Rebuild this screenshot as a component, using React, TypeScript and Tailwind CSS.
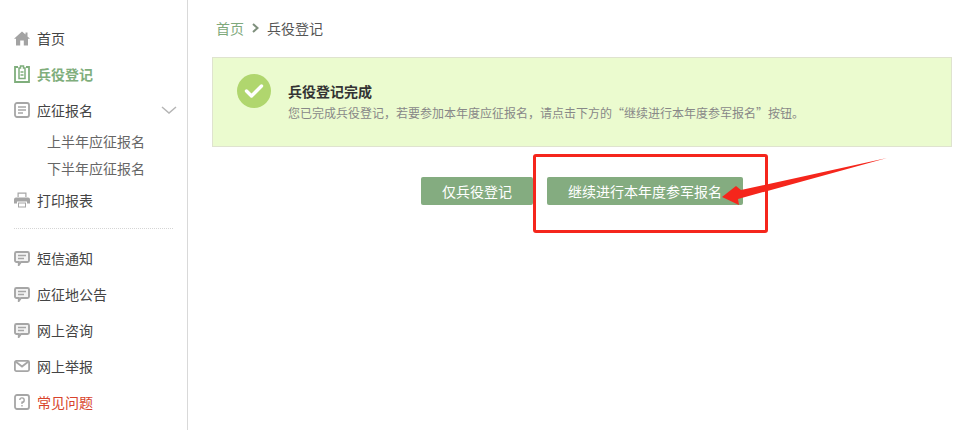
import React from 'react';

const font = { fontFamily: '"Noto Sans CJK SC", "Liberation Sans", sans-serif' };

const HomeIcon = () => (
    <svg width="16" height="15" viewBox="0 0 16 15" fill="#a3a3a3">
        <path d="M8 0.5 L11.5 3.6 L11.5 1.5 L13.5 1.5 L13.5 5.4 L16 7.8 L14 7.8 L14 14.5 L9.8 14.5 L9.8 9.5 L6.2 9.5 L6.2 14.5 L2 14.5 L2 7.8 L0 7.8 Z" />
    </svg>
);

const ClipboardIcon = () => (
    <svg width="16" height="18" viewBox="0 0 16 18" fill="none" stroke="#7fae7c" strokeWidth="1.8">
        <path d="M4 2 H1 V17 H15 V2 H12" />
        <path d="M6.5 1 H9.5 V3 H11 V13.5 H5 V3 H6.5 Z" strokeWidth="1.5" />
        <path d="M6.5 7 H9.5 M6.5 10 H9.5" strokeWidth="1.3" />
    </svg>
);

const DocIcon = () => (
    <svg width="16" height="16" viewBox="0 0 16 16" fill="none" stroke="#a6a6a6">
        <rect x="1" y="1" width="14" height="14" rx="2" strokeWidth="1.8" />
        <path d="M4 5 H12 M4 8 H12 M4 11 H9" strokeWidth="1.3" />
    </svg>
);

const PrintIcon = () => (
    <svg width="16" height="16" viewBox="0 0 16 16" fill="#a6a6a6">
        <path d="M3.5 0.5 H12.5 V5 H11.3 V1.7 H4.7 V5 H3.5 Z" />
        <path d="M2 5.5 H14 A2 2 0 0 1 16 7.5 V11.5 H13 V9.5 H3 V11.5 H0 V7.5 A2 2 0 0 1 2 5.5 Z" />
        <path d="M4 10.5 H12 V15.5 H4 Z M5 11.5 V14.5 H11 V11.5 Z" fillRule="evenodd" />
    </svg>
);

const ChatIcon = () => (
    <svg width="16" height="15" viewBox="0 0 16 15" fill="none" stroke="#a6a6a6">
        <path d="M2.5 1 H13.5 A1.5 1.5 0 0 1 15 2.5 V9.5 A1.5 1.5 0 0 1 13.5 11 H7 L4.8 14 V11 H2.5 A1.5 1.5 0 0 1 1 9.5 V2.5 A1.5 1.5 0 0 1 2.5 1 Z" strokeWidth="1.9" fill="#f3f3f3" />
        <path d="M4 4.5 H12 M4 7.5 H10" strokeWidth="1.3" />
    </svg>
);

const MailIcon = () => (
    <svg width="16" height="12" viewBox="0 0 16 12" fill="none" stroke="#a6a6a6" strokeWidth="1.8">
        <rect x="0.9" y="0.9" width="14.2" height="10.2" rx="1.5" />
        <path d="M1.5 1.5 L8 6.5 L14.5 1.5" />
    </svg>
);

const HelpIcon = () => (
    <svg width="16" height="16" viewBox="0 0 16 16" fill="none" stroke="#a6a6a6" strokeWidth="1.8">
        <rect x="1" y="1" width="14" height="14" rx="2" />
        <path d="M5.8 6 A2.2 2.2 0 1 1 8 8.3 V10" strokeWidth="1.4" />
        <path d="M8 11 V12.5" strokeWidth="1.4" />
    </svg>
);

const MenuItem: React.FC<{ icon: React.ReactNode; label: string; className?: string; active?: boolean }> = ({ icon, label, className, active }) => (
    <div className={`h-9 flex items-center ${className ?? 'text-[#444]'} ${active ? 'font-bold' : ''}`}>
        <span className="w-[37px] pl-[14px] flex items-center shrink-0">{icon}</span>
        <span className="text-sm">{label}</span>
    </div>
);

export default function App() {
    return (
        <div style={font} className="w-[960px] h-[430px] bg-white flex overflow-hidden relative">
            {/* sidebar */}
            <aside className="w-[188px] h-full shrink-0 border-r border-[#d9d9d9] pt-5">
                <MenuItem icon={<HomeIcon />} label="首页" />
                <MenuItem icon={<ClipboardIcon />} label="兵役登记" className="text-[#7fae7c]" active />
                <div className="flex items-center justify-between pr-[10px]">
                    <MenuItem icon={<DocIcon />} label="应征报名" />
                    <svg width="16" height="8" viewBox="0 0 16 8" fill="none" stroke="#b5b5b5" strokeWidth="1.5">
                        <path d="M1 1 L8 7 L15 1" />
                    </svg>
                </div>
                <div className="pl-[47px] text-sm text-[#666]">
                    <div className="h-[27px] leading-[27px]">上半年应征报名</div>
                    <div className="h-[27px] leading-[27px]">下半年应征报名</div>
                </div>
                <MenuItem icon={<PrintIcon />} label="打印报表" />
                <div className="mx-[14px] mt-[10px] mb-[11px] border-t border-dotted border-[#d5d5d5]" />
                <MenuItem icon={<ChatIcon />} label="短信通知" />
                <MenuItem icon={<ChatIcon />} label="应征地公告" />
                <MenuItem icon={<ChatIcon />} label="网上咨询" />
                <MenuItem icon={<MailIcon />} label="网上举报" />
                <MenuItem icon={<HelpIcon />} label="常见问题" className="text-[#d8432c]" />
            </aside>

            {/* main */}
            <main className="flex-1 pl-6 pr-2">
                <div className="h-[58px] pl-1 pb-[3px] flex items-center text-sm text-[#555]">
                    <span className="text-[#7fa97c]">首页</span>
                    <svg width="7" height="10" viewBox="0 0 7 10" fill="none" stroke="#7f907d" strokeWidth="2" className="mx-[8px]">
                        <path d="M1 1 L5.5 5 L1 9" />
                    </svg>
                    <span>兵役登记</span>
                </div>
                <div className="w-[740px] h-[90px] -mt-px bg-[#ebfbcf] border border-[#dfe3cf] flex items-start pl-6 pt-[16px]">
                    <div className="w-[34px] h-[34px] rounded-full bg-[#b0d66e] flex items-center justify-center shrink-0">
                        <svg width="20" height="16" viewBox="0 0 20 16" fill="none" stroke="#fff" strokeWidth="3.4" strokeLinecap="round" strokeLinejoin="round">
                            <path d="M2.5 8 L7.5 13 L17.5 3" />
                        </svg>
                    </div>
                    <div className="ml-[17px] pt-[8px]">
                        <div className="text-sm font-bold text-[#333] leading-[18px]">兵役登记完成</div>
                        <div className="text-xs text-[#888] leading-[18px] mt-[4px]">您已完成兵役登记，若要参加本年度应征报名，请点击下方的“继续进行本年度参军报名”按钮。</div>
                    </div>
                </div>
                <div className="flex mt-[30px] pl-[209px] gap-[14px]">
                    <button className="w-[112px] h-7 rounded-[2px] bg-[#84ac80] text-white text-sm">仅兵役登记</button>
                    <button className="w-[196px] h-7 rounded-[2px] bg-[#84ac80] text-white text-sm">继续进行本年度参军报名</button>
                </div>
            </main>

            {/* red annotation drawn over the screenshot */}
            <div className="absolute left-[533px] top-[154px] w-[235px] h-[79px] border-[3px] border-[#f5261c] rounded-[3px]" />
            <svg className="absolute left-[715px] top-[150px]" width="180" height="60" viewBox="0 0 180 60" fill="#f5261c">
                <path d="M172 8 L26 40 L21 36 L7 47 L24 55 L23 49 Z" />
            </svg>
        </div>
    );
}
